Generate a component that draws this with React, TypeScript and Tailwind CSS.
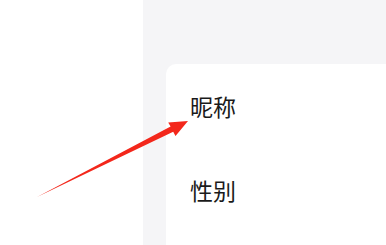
export default function App() {
  const rows = ["昵称", "性别"];
  return (
    <div
      className="relative flex h-[245px] w-[386px] overflow-hidden bg-white text-[#1a1a1a]"
      style={{ fontFamily: '"Noto Sans CJK SC", "Noto Sans", sans-serif' }}
    >
      {/* left blank column */}
      <div className="w-[143px] shrink-0 bg-white" />

      {/* settings panel */}
      <div className="flex-1 bg-[#f5f5f7] pl-[23px] pt-[64px]">
        <div className="h-full rounded-tl-[10px] bg-white">
          {rows.map((r) => (
            <div key={r} className="flex h-[84px] items-center pl-[24px] text-[23px] leading-none">
              {r}
            </div>
          ))}
        </div>
      </div>

      {/* annotation arrow */}
      <svg className="pointer-events-none absolute left-0 top-0" width="386" height="245" viewBox="0 0 386 245">
        <polygon
          points="37,197 173.2,131.8 175.5,136 188,121 168.2,122.5 170.6,126.4"
          fill="#f3271b"
        />
      </svg>
    </div>
  );
}
